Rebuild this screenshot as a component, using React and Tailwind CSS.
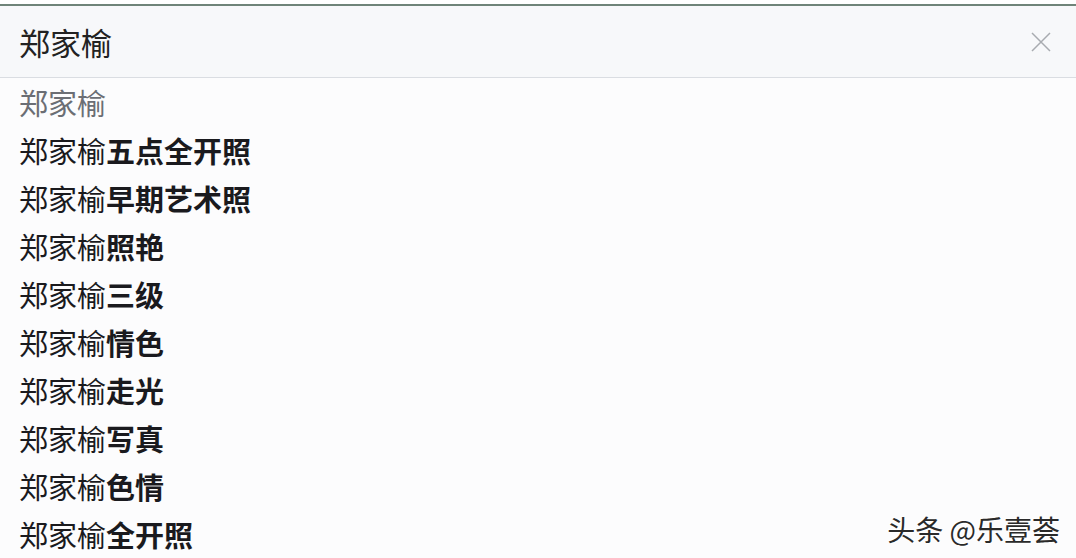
import React from "react";

const items = [
  "五点全开照",
  "早期艺术照",
  "照艳",
  "三级",
  "情色",
  "走光",
  "写真",
  "色情",
  "全开照",
];

export default function App() {
  const font = { fontFamily: '"Noto Sans CJK SC", "Noto Sans", sans-serif' };
  return (
    <div className="relative w-[1076px] h-[558px] overflow-hidden bg-[#fcfcfd]" style={font}>
      <div className="h-[4px] bg-white" />
      <div className="h-[2px] bg-[#6f8479]" />
      <div className="flex items-center justify-between h-[72px] pl-[19px] pr-[25px] bg-[#f7f8fa] border-b border-[#dadde2]">
        <span className="text-[31px] leading-none text-[#222]">郑家榆</span>
        <svg width="20" height="20" viewBox="0 0 20 20">
          <path d="M1 1 L19 19 M19 1 L1 19" stroke="#a8abb0" strokeWidth="1.5" fill="none" />
        </svg>
      </div>
      <div className="flex flex-col">
        <div className="h-[48px] flex items-center pl-[19px] text-[29px] leading-none text-[#6b6e74]">郑家榆</div>
        {items.map((s) => (
          <div key={s} className="h-[48px] flex items-center pl-[19px] text-[29px] leading-none text-[#1a1a1e]">
            <span>郑家榆</span>
            <span className="font-bold">{s}</span>
          </div>
        ))}
      </div>
      <div className="absolute right-[16px] bottom-[15px] text-[28px] leading-none text-[#2a2a2a] [text-shadow:1px_1px_0_#fff,-1px_-1px_0_#fff]">
        头条 @乐壹荟
      </div>
    </div>
  );
}
